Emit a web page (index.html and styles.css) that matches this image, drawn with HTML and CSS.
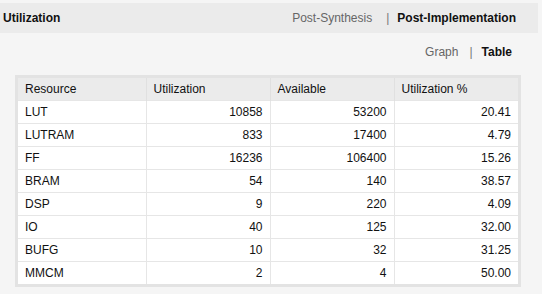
FILE: index.html
```html
<!DOCTYPE html>
<html>
<head>
<meta charset="utf-8">
<link rel="stylesheet" href="styles.css">
</head>
<body>
<div class="header">
  <div class="title">Utilization</div>
  <div class="tabs">
    <span class="tab">Post-Synthesis</span><span class="sep sep-a">|</span><span class="tab active">Post-Implementation</span>
  </div>
</div>
<div class="views">
  <span class="tab">Graph</span><span class="sep sep-b">|</span><span class="tab active">Table</span>
</div>
<div class="table-box">
  <table class="util">
    <colgroup>
      <col class="col-res"><col class="col-num"><col class="col-num"><col class="col-num">
    </colgroup>
    <thead>
      <tr><th>Resource</th><th>Utilization</th><th>Available</th><th>Utilization %</th></tr>
    </thead>
    <tbody>
      <tr><td>LUT</td><td class="num">10858</td><td class="num">53200</td><td class="num">20.41</td></tr>
      <tr><td>LUTRAM</td><td class="num">833</td><td class="num">17400</td><td class="num">4.79</td></tr>
      <tr><td>FF</td><td class="num">16236</td><td class="num">106400</td><td class="num">15.26</td></tr>
      <tr><td>BRAM</td><td class="num">54</td><td class="num">140</td><td class="num">38.57</td></tr>
      <tr><td>DSP</td><td class="num">9</td><td class="num">220</td><td class="num">4.09</td></tr>
      <tr><td>IO</td><td class="num">40</td><td class="num">125</td><td class="num">32.00</td></tr>
      <tr><td>BUFG</td><td class="num">10</td><td class="num">32</td><td class="num">31.25</td></tr>
      <tr><td>MMCM</td><td class="num">2</td><td class="num">4</td><td class="num">50.00</td></tr>
    </tbody>
  </table>
</div>
</body>
</html>
```
FILE: styles.css
```css
html, body {
  margin: 0;
  padding: 0;
  background: #f5f5f5;
  font-family: "Liberation Sans", Arial, sans-serif;
  font-size: 12px;
  color: #111;
}
.header {
  margin: 3px 4px 0 0;
  height: 30px;
  background: #ebebeb;
  display: flex;
  align-items: center;
  justify-content: space-between;
  padding: 0 22px 0 3px;
}
.title {
  font-weight: bold;
  color: #111;
}
.tabs, .views {
  display: flex;
  align-items: center;
}
.tab {
  color: #666;
}
.tab.active {
  color: #111;
  font-weight: bold;
}
.sep {
  color: #777;
}
.sep-a {
  margin: 0 8px 0 14px;
}
.sep-b {
  margin: 0 9px 0 11px;
}
.views {
  justify-content: flex-end;
  padding: 12px 30px 0 0;
  height: 14px;
  line-height: 14px;
}
.table-box {
  margin: 16px 0 0 15px;
  width: 500px;
  border: 3px solid #e3e3e3;
  background: #fff;
}
.util {
  width: 500px;
  border-collapse: collapse;
  table-layout: fixed;
}
.col-res { width: 128px; }
.col-num { width: 124px; }
.util th {
  background: #ebebeb;
  font-weight: normal;
  text-align: left;
  height: 22px;
  padding: 0 7px;
  border-left: 1px solid #e0e0e0;
}
.util th:first-child { border-left: none; }
.util td {
  height: 22px;
  padding: 0 7px;
  border-top: 1px solid #e6e6e6;
  border-left: 1px solid #e6e6e6;
}
.util td:first-child { border-left: none; }
.util td.num { text-align: right; }
```
